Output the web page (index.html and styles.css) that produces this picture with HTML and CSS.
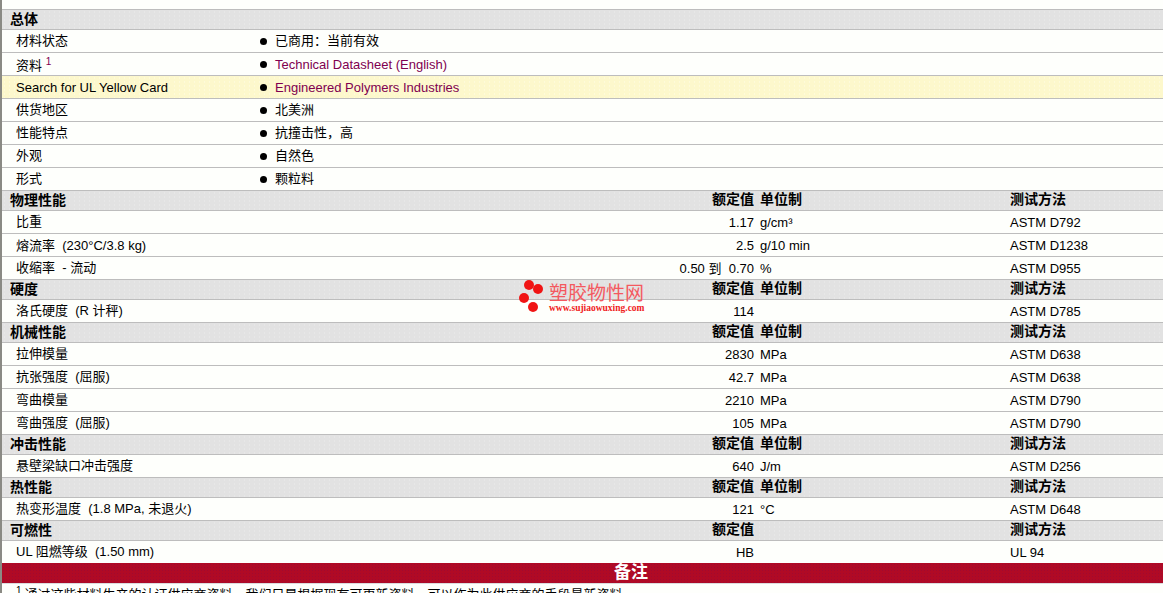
FILE: index.html
```html
<!DOCTYPE html>
<html lang="zh">
<head>
<meta charset="utf-8">
<title>塑胶物性网</title>
<link rel="stylesheet" href="styles.css">
</head>
<body>
<main class="sheet">
  <section>
    <div class="head"><span>总体</span></div>
    <div class="row info"><span>材料状态</span><span class="dot"></span><span>已商用：当前有效</span></div>
    <div class="row info"><span class="lower">资料 <sup class="sup">1</sup></span><span class="dot"></span><a class="link low">Technical Datasheet (English)</a></div>
    <div class="row info hl"><span class="low">Search for UL Yellow Card</span><span class="dot"></span><a class="link low">Engineered Polymers Industries</a></div>
    <div class="row info"><span>供货地区</span><span class="dot"></span><span>北美洲</span></div>
    <div class="row info"><span>性能特点</span><span class="dot"></span><span>抗撞击性，高</span></div>
    <div class="row info"><span>外观</span><span class="dot"></span><span>自然色</span></div>
    <div class="row info"><span>形式</span><span class="dot"></span><span>颗粒料</span></div>
  </section>
  <section>
    <div class="head data"><span>物理性能</span><span class="num">额定值</span><span class="unit">单位制</span><span class="meth">测试方法</span></div>
    <div class="row data"><span>比重</span><span class="num">1.17</span><span class="unit">g/cm³</span><span class="meth">ASTM D792</span></div>
    <div class="row data"><span class="low">熔流率&nbsp;&nbsp;(230°C/3.8 kg)</span><span class="num">2.5</span><span class="unit">g/10 min</span><span class="meth">ASTM D1238</span></div>
    <div class="row data"><span>收缩率&nbsp;&nbsp;- 流动</span><span class="num">0.50 到&nbsp;&nbsp;0.70</span><span class="unit">%</span><span class="meth">ASTM D955</span></div>
  </section>
  <section>
    <div class="head data"><span>硬度</span><span class="num">额定值</span><span class="unit">单位制</span><span class="meth">测试方法</span></div>
    <div class="row data"><span>洛氏硬度&nbsp;&nbsp;(R 计秤)</span><span class="num">114</span><span class="unit"></span><span class="meth">ASTM D785</span></div>
  </section>
  <section>
    <div class="head data"><span>机械性能</span><span class="num">额定值</span><span class="unit">单位制</span><span class="meth">测试方法</span></div>
    <div class="row data"><span>拉伸模量</span><span class="num">2830</span><span class="unit">MPa</span><span class="meth">ASTM D638</span></div>
    <div class="row data"><span>抗张强度&nbsp;&nbsp;(屈服)</span><span class="num">42.7</span><span class="unit">MPa</span><span class="meth">ASTM D638</span></div>
    <div class="row data"><span>弯曲模量</span><span class="num">2210</span><span class="unit">MPa</span><span class="meth">ASTM D790</span></div>
    <div class="row data"><span>弯曲强度&nbsp;&nbsp;(屈服)</span><span class="num">105</span><span class="unit">MPa</span><span class="meth">ASTM D790</span></div>
  </section>
  <section>
    <div class="head data"><span>冲击性能</span><span class="num">额定值</span><span class="unit">单位制</span><span class="meth">测试方法</span></div>
    <div class="row data"><span>悬壁梁缺口冲击强度</span><span class="num">640</span><span class="unit">J/m</span><span class="meth">ASTM D256</span></div>
  </section>
  <section>
    <div class="head data"><span>热性能</span><span class="num">额定值</span><span class="unit">单位制</span><span class="meth">测试方法</span></div>
    <div class="row data"><span>热变形温度&nbsp;&nbsp;(1.8 MPa, 未退火)</span><span class="num">121</span><span class="unit">°C</span><span class="meth">ASTM D648</span></div>
  </section>
  <section>
    <div class="head data"><span>可燃性</span><span class="num">额定值</span><span class="unit"></span><span class="meth">测试方法</span></div>
    <div class="row data"><span>UL 阻燃等级&nbsp;&nbsp;(1.50 mm)</span><span class="num">HB</span><span class="unit"></span><span class="meth">UL 94</span></div>
  </section>
  <h2 class="band">备注</h2>
  <p class="note"><sup class="note-sup">1</sup>通过这些材料生产的认证供应商资料，我们只是根据现有可更新资料，可以作为此供应商的手段最新资料</p>

  <div class="mark">
    <svg class="mark-dots" width="28" height="38" viewBox="0 0 28 38" aria-hidden="true">
      <circle cx="10" cy="6" r="5" fill="#f01414"/>
      <circle cx="19" cy="10" r="5" fill="#f01414"/>
      <circle cx="5" cy="19" r="5" fill="#f01414"/>
      <circle cx="14" cy="28" r="5" fill="#f01414"/>
    </svg>
    <div class="mark-text">
      <div class="mark-name">塑胶物性网</div>
      <div class="mark-url">www.sujiaowuxing.com</div>
    </div>
  </div>
</main>
</body>
</html>
```
FILE: styles.css
```css
html, body {
  margin: 0;
  padding: 0;
  height: 593px;
  overflow: hidden;
  background: #fff;
}
body {
  font-family: "Liberation Sans", "Noto Sans CJK SC", sans-serif;
  font-size: 13px;
  color: #000;
}
.sheet {
  position: relative;
  box-sizing: border-box;
  border-left: 2px solid #8a8a84;
  padding-top: 9px;
  height: 593px;
  overflow: hidden;
  background: #fefffc;
}
.head, .row {
  box-sizing: border-box;
  border-top: 1px solid #bdbdbd;
  white-space: nowrap;
  display: grid;
  align-items: center;
}
.head {
  height: 20px;
  padding-left: 8px;
  background-color: #e2e2e2;
  background-image: radial-gradient(#e8e8e8 0.6px, transparent 0.8px);
  background-size: 5px 4px;
  font-size: 14px;
  font-weight: 700;
  line-height: 15px;
}
.head.data {
  grid-template-columns: 250px 494px 256px 1fr;
  padding-left: 8px;
}
.head .num, .head .unit, .head .meth { padding-bottom: 2px; }
.row {
  height: 23px;
  padding-left: 14px;
  line-height: 14px;
}
.info { grid-template-columns: 244px 15px 1fr; }
.row.data { grid-template-columns: 244px 494px 256px 1fr; }
.row .num, .row .unit, .row .meth, .low { padding-top: 2px; }
.lower { padding-top: 4px; }
.hl {
  background-color: #fdf8cc;
  background-image: radial-gradient(#fefbdc 0.6px, transparent 0.8px);
  background-size: 5px 4px;
}
.dot {
  width: 7px;
  height: 7px;
  border-radius: 50%;
  background: #000;
}
.link { color: #800050; }
.sup {
  font-size: 10px;
  line-height: 0;
  color: #800050;
  vertical-align: 5px;
}
.num { text-align: right; }
.unit { padding-left: 6px; }
.band {
  margin: 0;
  box-sizing: border-box;
  height: 20px;
  padding-left: 97px;
  background-color: #b00a25;
  background-image: radial-gradient(#a00a30 0.6px, transparent 0.8px);
  background-size: 3px 3px;
  color: #fff;
  font-family: "Liberation Serif", "Noto Sans CJK SC", serif;
  font-size: 17px;
  font-weight: 700;
  line-height: 20px;
  text-align: center;
}
.note {
  margin: 0;
  padding: 3px 0 0 14px;
  border-top: 1px solid #dcdcdc;
  line-height: 16px;
  white-space: nowrap;
}
.note-sup {
  font-size: 10px;
  line-height: 0;
  margin-right: 3px;
  vertical-align: 5px;
}
.mark {
  position: absolute;
  left: 517px;
  top: 279px;
  display: flex;
  gap: 2px;
  pointer-events: none;
}
.mark-text { display: flex; flex-direction: column; }
.mark-name {
  color: #f4595f;
  font-size: 19px;
  line-height: 23px;
  margin-top: 3px;
}
.mark-url {
  margin-top: -2px;
  color: #f01c1c;
  font-family: "Liberation Serif", serif;
  font-size: 9.5px;
  font-weight: 700;
  line-height: 10px;
}
```
